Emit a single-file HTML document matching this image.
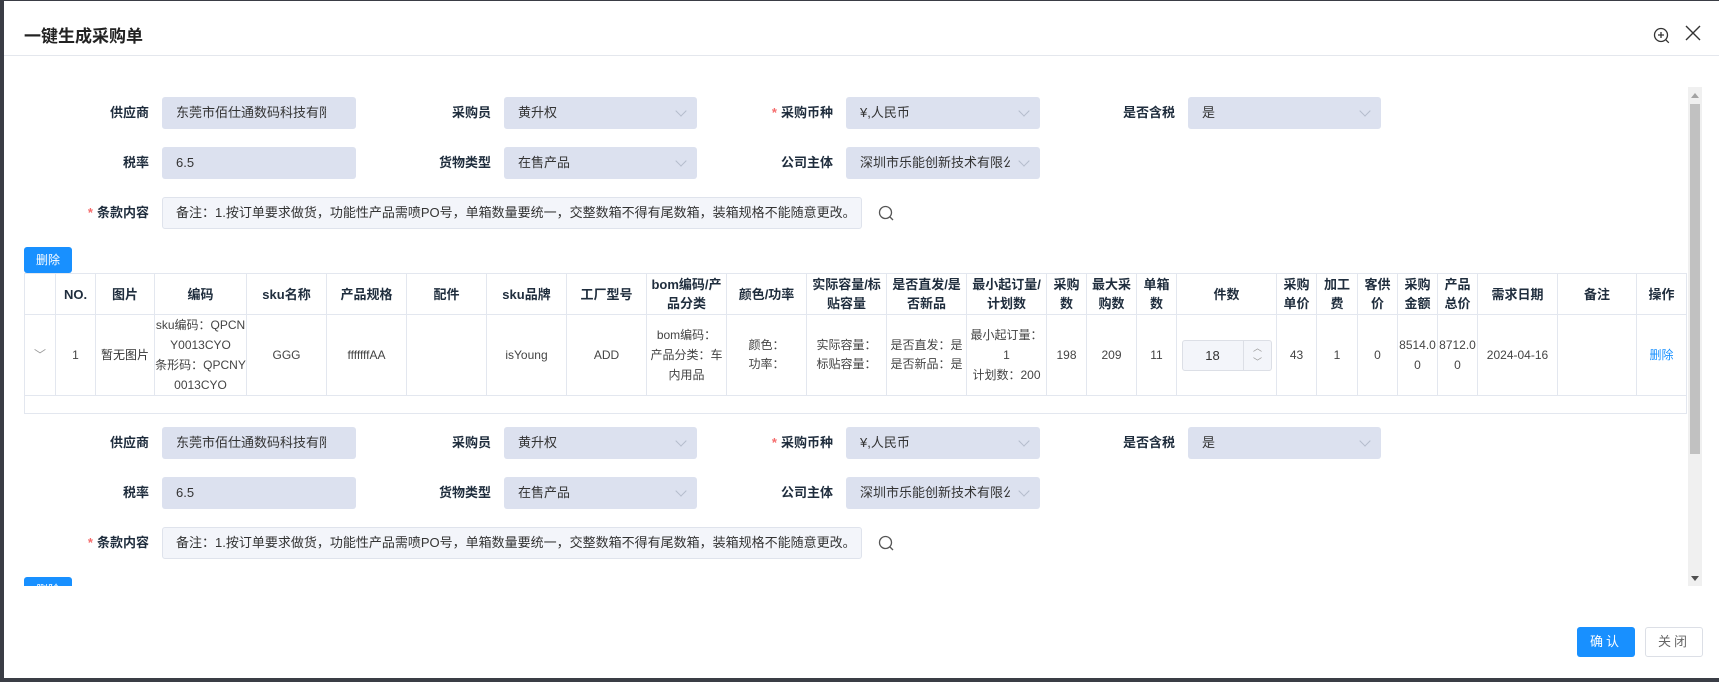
<!DOCTYPE html>
<html><head><meta charset="utf-8"><style>
*{box-sizing:border-box;margin:0;padding:0}
body{width:1719px;height:682px;background:#3a3d45;position:relative;overflow:hidden;font-family:"Liberation Sans","Noto Sans CJK SC",sans-serif;color:#1f2d3d}
.dlg{position:absolute;left:4px;top:1px;width:1715px;height:677px;background:#fff}
.a{position:absolute}
.title{left:20px;top:21px;font-size:17px;font-weight:bold;color:#222}
.hline{left:0;top:54px;width:1715px;height:1px;background:#e4e7ed}
.lbl{position:absolute;font-size:13px;font-weight:bold;color:#1f2d3d;text-align:right;width:110px;line-height:32px}
.star{color:#f56c6c;margin-right:4px}
.inp{position:absolute;height:32px;background:#dce1ef;border-radius:3px;font-size:13px;line-height:32px;padding-left:14px;color:#333;overflow:hidden;white-space:nowrap}
.inp .t{display:block;overflow:hidden;white-space:nowrap}
.inp .ch{position:absolute;right:12px;top:10px;width:8px;height:8px;border-right:1px solid #b4bccc;border-bottom:1px solid #b4bccc;transform:rotate(45deg)}
.ta{position:absolute;height:32px;background:#f3f5fa;border:1px solid #dfe3ec;border-radius:3px;font-size:13px;line-height:30px;padding-left:13px;color:#333;white-space:nowrap;overflow:hidden}
.srch{position:absolute;width:16px;height:16px}
.btn{position:absolute;background:#1890ff;color:#fff;border-radius:3px;font-size:12px;text-align:center}
table{position:absolute;border-collapse:collapse;table-layout:fixed;font-size:12px}
td,th{border:1px solid #e3e7ef;text-align:center;vertical-align:middle;overflow:hidden;word-break:break-all;padding:0 3px}
th{font-size:13px;font-weight:bold;color:#1f2d3d;height:41px;line-height:19px;padding:0 4px}
td{color:#444;height:81px;line-height:19px}
.nw{white-space:nowrap;padding:0}
</style></head><body>
<div class="dlg">
<div class="a title">一键生成采购单</div>
<svg class="a" style="left:1649px;top:26px" width="18" height="18" viewBox="0 0 18 18"><circle cx="8" cy="8" r="6.5" fill="none" stroke="#333" stroke-width="1.3"/><path d="M5 8h6M8 5v6M12.8 12.8l3 3" stroke="#333" stroke-width="1.3"/></svg>
<svg class="a" style="left:1681px;top:24px" width="16" height="16" viewBox="0 0 16 16"><path d="M1 1l14 14M15 1L1 15" stroke="#333" stroke-width="1.4"/></svg>
<div class="a hline"></div>

<div class="a" style="left:0;top:56px;width:1684px;height:529px;overflow:hidden">
<div class="a" style="left:0;top:-56px;width:1684px;height:700px">
<div class="lbl" style="left:35px;top:96px">供应商</div>
<div class="inp" style="left:158px;top:96px;width:194px"><span class="t" style="width:150px">东莞市佰仕通数码科技有限公司</span></div>
<div class="lbl" style="left:377px;top:96px">采购员</div>
<div class="inp" style="left:500px;top:96px;width:193px">黄升权<i class="ch"></i></div>
<div class="lbl" style="left:719px;top:96px"><span class="star">*</span>采购币种</div>
<div class="inp" style="left:842px;top:96px;width:194px">¥,人民币<i class="ch"></i></div>
<div class="lbl" style="left:1061px;top:96px">是否含税</div>
<div class="inp" style="left:1184px;top:96px;width:193px">是<i class="ch"></i></div>
<div class="lbl" style="left:35px;top:146px">税率</div>
<div class="inp" style="left:158px;top:146px;width:194px">6.5</div>
<div class="lbl" style="left:377px;top:146px">货物类型</div>
<div class="inp" style="left:500px;top:146px;width:193px">在售产品<i class="ch"></i></div>
<div class="lbl" style="left:719px;top:146px">公司主体</div>
<div class="inp" style="left:842px;top:146px;width:194px"><span class="t" style="width:150px">深圳市乐能创新技术有限公司</span><i class="ch"></i></div>
<div class="lbl" style="left:35px;top:196px"><span class="star">*</span>条款内容</div>
<div class="ta" style="left:158px;top:196px;width:700px">备注：1.按订单要求做货，功能性产品需喷PO号，单箱数量要统一，交整数箱不得有尾数箱，装箱规格不能随意更改。</div>
<svg class="srch" style="left:874px;top:204px" viewBox="0 0 16 16"><circle cx="7.5" cy="7.5" r="6" fill="none" stroke="#555" stroke-width="1.3"/><path d="M12 12l3 3" stroke="#555" stroke-width="1.3"/></svg>
<div class="btn" style="left:20px;top:246px;width:48px;height:26px;line-height:26px">删除</div>

<table style="left:20px;top:272px;width:1663px">
<colgroup><col style="width:31px"><col style="width:40px"><col style="width:59px"><col style="width:92px"><col style="width:80px"><col style="width:80px"><col style="width:80px"><col style="width:80px"><col style="width:80px"><col style="width:80px"><col style="width:80px"><col style="width:80px"><col style="width:80px"><col style="width:80px"><col style="width:40px"><col style="width:50px"><col style="width:40px"><col style="width:100px"><col style="width:40px"><col style="width:41px"><col style="width:40px"><col style="width:40px"><col style="width:40px"><col style="width:80px"><col style="width:79px"><col style="width:50px"></colgroup>
<tr><th></th><th class="nw">NO.</th><th>图片</th><th>编码</th><th>sku名称</th><th>产品规格</th><th>配件</th><th>sku品牌</th><th>工厂型号</th><th class="nw">bom编码/产<br>品分类</th><th>颜色/功率</th><th class="nw">实际容量/标<br>贴容量</th><th class="nw">是否直发/是<br>否新品</th><th class="nw">最小起订量/<br>计划数</th><th class="nw">采购<br>数</th><th class="nw">最大采<br>购数</th><th class="nw">单箱<br>数</th><th>件数</th><th class="nw">采购<br>单价</th><th class="nw">加工<br>费</th><th class="nw">客供<br>价</th><th class="nw">采购<br>金额</th><th class="nw">产品<br>总价</th><th>需求日期</th><th>备注</th><th>操作</th></tr>
<tr><td style="color:#999">﹀</td><td>1</td><td style="color:#333;padding:0">暂无图片</td><td class="nw" style="line-height:20px">sku编码：QPCN<br>Y0013CYO<br>条形码：QPCNY<br>0013CYO</td><td>GGG</td><td>fffffffAA</td><td></td><td>isYoung</td><td>ADD</td><td class="nw" style="line-height:20px">bom编码：<br>产品分类：车<br>内用品</td><td>颜色：<br>功率：</td><td>实际容量：<br>标贴容量：</td><td class="nw">是否直发：是<br>是否新品：是</td><td class="nw" style="line-height:20px">最小起订量：<br>1<br>计划数：200</td><td>198</td><td>209</td><td>11</td>
<td><div style="margin:0 auto;width:90px;height:31px;border:1px solid #dcdfe6;border-radius:3px;background:#f3f5fa;position:relative;text-align:left"><span style="position:absolute;left:0;width:60px;text-align:center;line-height:29px;font-size:13px;color:#333">18</span><span style="position:absolute;left:60px;top:0;width:29px;height:29px;border-left:1px solid #dcdfe6;font-size:9px;color:#999;line-height:14px;text-align:center">︿<br>﹀</span></div></td>
<td>43</td><td>1</td><td>0</td><td class="nw" style="line-height:20px">8514.0<br>0</td><td class="nw" style="line-height:20px">8712.0<br>0</td><td>2024-04-16</td><td></td><td style="color:#1890ff">删除</td></tr>
<tr><td colspan="26" style="height:18px"></td></tr>
</table>

<div class="lbl" style="left:35px;top:426px">供应商</div>
<div class="inp" style="left:158px;top:426px;width:194px"><span class="t" style="width:150px">东莞市佰仕通数码科技有限公司</span></div>
<div class="lbl" style="left:377px;top:426px">采购员</div>
<div class="inp" style="left:500px;top:426px;width:193px">黄升权<i class="ch"></i></div>
<div class="lbl" style="left:719px;top:426px"><span class="star">*</span>采购币种</div>
<div class="inp" style="left:842px;top:426px;width:194px">¥,人民币<i class="ch"></i></div>
<div class="lbl" style="left:1061px;top:426px">是否含税</div>
<div class="inp" style="left:1184px;top:426px;width:193px">是<i class="ch"></i></div>
<div class="lbl" style="left:35px;top:476px">税率</div>
<div class="inp" style="left:158px;top:476px;width:194px">6.5</div>
<div class="lbl" style="left:377px;top:476px">货物类型</div>
<div class="inp" style="left:500px;top:476px;width:193px">在售产品<i class="ch"></i></div>
<div class="lbl" style="left:719px;top:476px">公司主体</div>
<div class="inp" style="left:842px;top:476px;width:194px"><span class="t" style="width:150px">深圳市乐能创新技术有限公司</span><i class="ch"></i></div>
<div class="lbl" style="left:35px;top:526px"><span class="star">*</span>条款内容</div>
<div class="ta" style="left:158px;top:526px;width:700px">备注：1.按订单要求做货，功能性产品需喷PO号，单箱数量要统一，交整数箱不得有尾数箱，装箱规格不能随意更改。</div>
<svg class="srch" style="left:874px;top:534px" viewBox="0 0 16 16"><circle cx="7.5" cy="7.5" r="6" fill="none" stroke="#555" stroke-width="1.3"/><path d="M12 12l3 3" stroke="#555" stroke-width="1.3"/></svg>
<div class="btn" style="left:20px;top:576px;width:48px;height:26px;line-height:26px">删除</div>
</div></div>

<div class="a" style="left:1684px;top:86px;width:14px;height:499px;background:#f0f0f0"></div>
<div class="a" style="left:1686px;top:103px;width:10px;height:350px;background:#c1c1c1"></div>
<div class="a" style="left:1687px;top:92px;width:0;height:0;border-left:4px solid transparent;border-right:4px solid transparent;border-bottom:5px solid #a3a3a3"></div>
<div class="a" style="left:1687px;top:575px;width:0;height:0;border-left:4px solid transparent;border-right:4px solid transparent;border-top:5px solid #505050"></div>

<div class="btn" style="left:1573px;top:626px;width:58px;height:30px;line-height:30px;font-size:13px;letter-spacing:3px">确认</div>
<div class="a" style="left:1641px;top:626px;width:58px;height:30px;border:1px solid #dcdfe6;border-radius:3px;text-align:center;line-height:28px;font-size:13px;color:#666;letter-spacing:3px">关闭</div>
</div>
</body></html>
